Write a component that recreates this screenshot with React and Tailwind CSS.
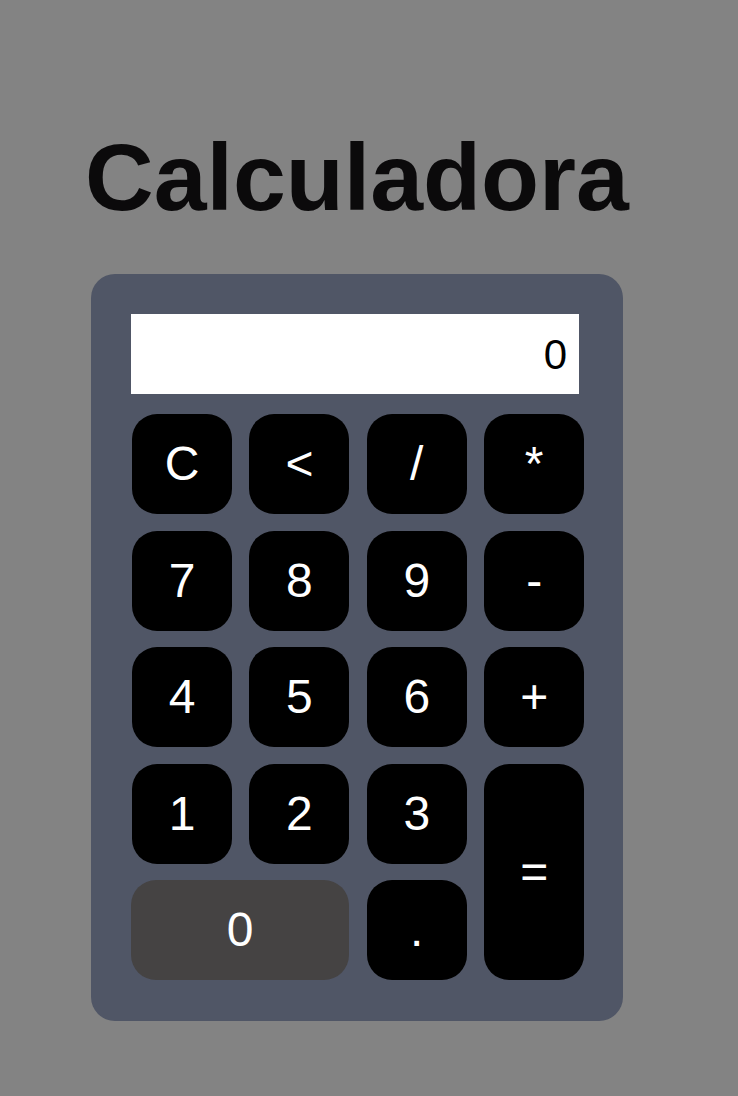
import React from "react";

const Btn = ({ children, className = "" }) => (
  <button
    className={
      "flex items-center justify-center rounded-[25px] text-white text-[48px] leading-none " +
      className
    }
    style={{ fontFamily: '"Liberation Sans", Arial, sans-serif' }}
  >
    {children}
  </button>
);

export default function App() {
  return (
    <div className="min-h-[1096px] w-full bg-[#838383]">
      <div className="w-[714px] flex flex-col items-center pt-[122px]">
        <h1
          className="text-[95px] font-bold leading-[110px] text-[#0b0a0b]"
          style={{ fontFamily: '"Liberation Sans", Arial, sans-serif' }}
        >
          Calculadora
        </h1>
        <div className="mt-[42px] w-[532px] h-[747px] rounded-[24px] bg-[#505666] pt-[40px] pl-[40px] pr-[40px]">
          <div
            className="w-[448px] h-[80px] bg-white flex items-center justify-end pr-[12px] text-[42px] text-black"
            style={{ fontFamily: '"Liberation Sans", Arial, sans-serif' }}
          >
            0
          </div>
          <div className="mt-[20px] ml-[1px] grid grid-cols-[repeat(4,100px)] grid-rows-[repeat(5,100px)] gap-x-[17.4px] gap-y-[16.5px]">
            <Btn className="bg-black">C</Btn>
            <Btn className="bg-black">&lt;</Btn>
            <Btn className="bg-black">/</Btn>
            <Btn className="bg-black">*</Btn>
            <Btn className="bg-black">7</Btn>
            <Btn className="bg-black">8</Btn>
            <Btn className="bg-black">9</Btn>
            <Btn className="bg-black">-</Btn>
            <Btn className="bg-black">4</Btn>
            <Btn className="bg-black">5</Btn>
            <Btn className="bg-black">6</Btn>
            <Btn className="bg-black">+</Btn>
            <Btn className="bg-black">1</Btn>
            <Btn className="bg-black">2</Btn>
            <Btn className="bg-black">3</Btn>
            <Btn className="bg-black row-span-2">=</Btn>
            <Btn className="bg-[#454343] col-span-2 -ml-[1px]">0</Btn>
            <Btn className="bg-black">.</Btn>
          </div>
        </div>
      </div>
    </div>
  );
}
